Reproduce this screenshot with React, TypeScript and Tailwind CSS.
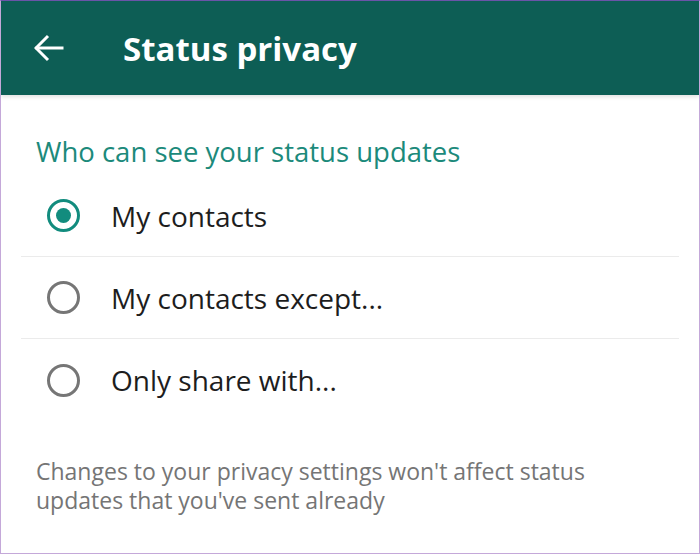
import { useState } from "react";

const OPTIONS = ["My contacts", "My contacts except...", "Only share with..."];

function Radio({ checked }: { checked: boolean }) {
  return (
    <span
      className={`w-[33px] h-[33px] rounded-full border-[3.5px] flex items-center justify-center shrink-0 ${
        checked ? "border-[#128c7e]" : "border-[#767676]"
      }`}
    >
      {checked && <span className="w-[15px] h-[15px] rounded-full bg-[#128c7e]" />}
    </span>
  );
}

export default function App() {
  const [selected, setSelected] = useState(0);

  return (
    <div className="w-[700px] h-[554px] bg-white border border-[#c4a8d9] border-t-[#6a54a8] overflow-hidden font-['Open_Sans',sans-serif]">
      {/* Toolbar */}
      <header className="h-[94px] bg-[#0d5e55] flex items-center shadow-[0_2px_4px_rgba(0,0,0,0.12)] relative">
        <svg
          width="30"
          height="28"
          viewBox="0 0 30 28"
          className="ml-[33px]"
          fill="none"
          stroke="white"
          strokeWidth="3"
          strokeLinecap="square"
        >
          <path d="M28 14H3" />
          <path d="M14 2L2 14l12 12" strokeLinecap="butt" />
        </svg>
        <h1 className="ml-[59px] text-white text-[33px] font-bold leading-none">
          Status privacy
        </h1>
      </header>

      {/* Content */}
      <div className="pt-[40px]">
        <h2 className="px-[35px] text-[#1c8a7b] text-[27.5px] leading-[34px]">
          Who can see your status updates
        </h2>

        <div className="mt-[6px] px-[20px]">
          {OPTIONS.map((label, i) => (
            <button
              key={label}
              onClick={() => setSelected(i)}
              className={`w-full h-[82px] flex items-center text-left ${
                i < OPTIONS.length - 1 ? "border-b border-[#ebebeb]" : ""
              }`}
            >
              <span className="ml-[26px]">
                <Radio checked={selected === i} />
              </span>
              <span className="ml-[31px] text-[28px] text-[#1d1d1d]">{label}</span>
            </button>
          ))}
        </div>

        <p className="mt-[36px] px-[35px] text-[23px] leading-[29px] text-[#757575] w-[660px]">
          Changes to your privacy settings won't affect status updates that you've sent already
        </p>
      </div>
    </div>
  );
}
